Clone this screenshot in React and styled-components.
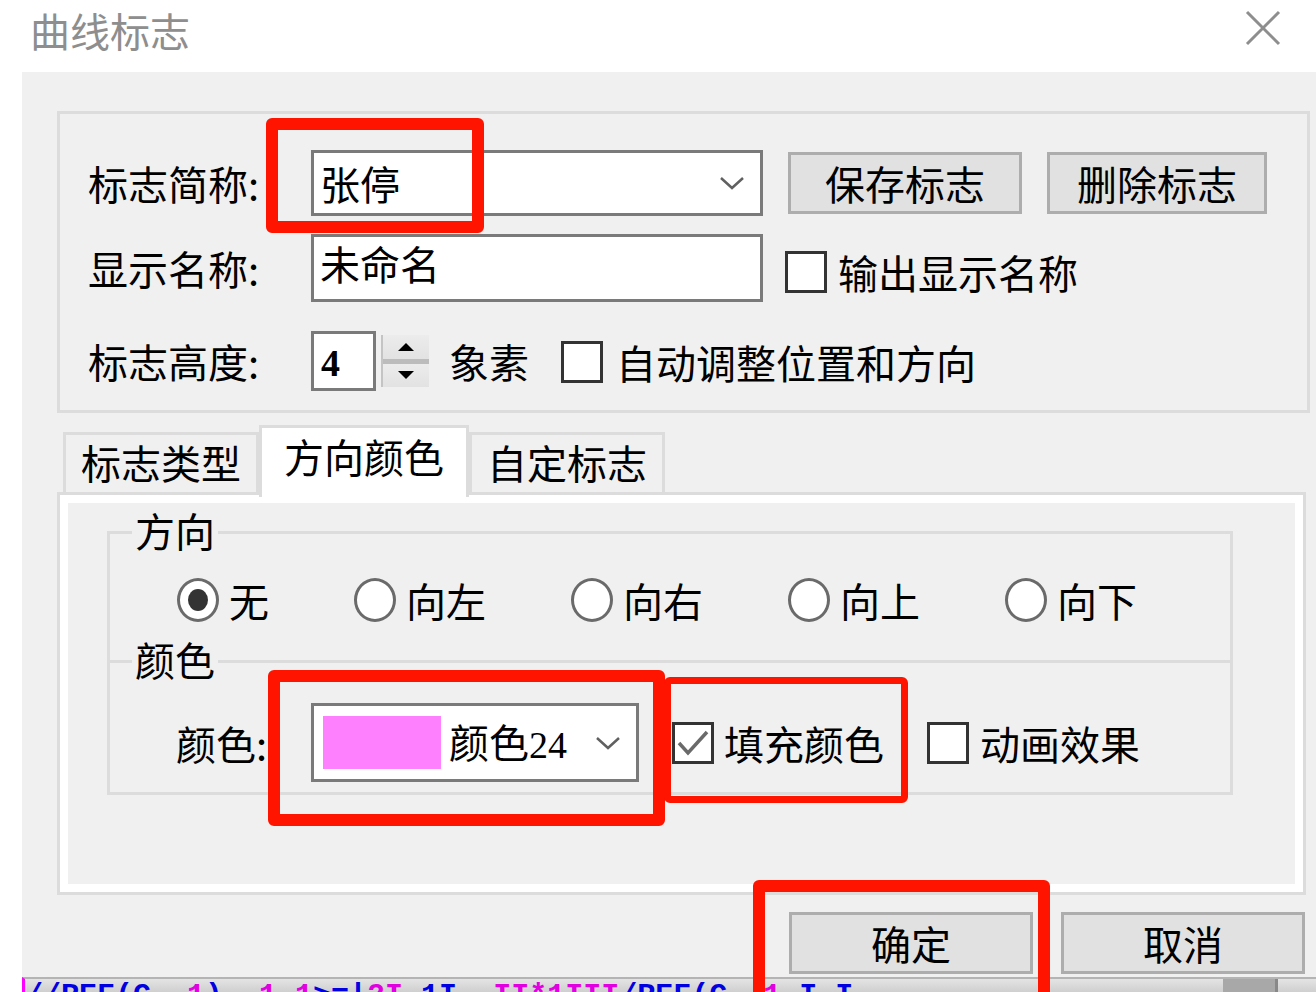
import React from 'react'
import styled, { createGlobalStyle } from 'styled-components'

const GlobalStyle = createGlobalStyle`
  html, body {
    margin: 0;
    padding: 0;
    background: #fff;
  }
  body {
    font-family: "Noto Sans CJK SC", "Noto Sans", sans-serif;
  }
`

const Page = styled.div`
  position: relative;
  width: 1316px;
  height: 992px;
  overflow: hidden;
  background: #fff;
  color: #000;
  font-size: 40px;
  line-height: 40px;
`

const TitleBar = styled.header`
  height: 72px;
  display: flex;
  justify-content: space-between;
  align-items: flex-start;
  padding: 10px 35px 0 30px;
  box-sizing: border-box;
`

const Title = styled.h1`
  margin: 0;
  font-size: 40px;
  line-height: 40px;
  font-weight: normal;
  color: #8e8e8e;
`

const Dialog = styled.main`
  margin-left: 22px;
  height: 905px;
  background: #f0f0f0;
  padding: 39px 6px 0 35px;
  box-sizing: border-box;
  display: flex;
  flex-direction: column;
  overflow: hidden;
`

const TopGroup = styled.section`
  border: 3px solid #dcdcdc;
  padding: 36px 0 19px 28px;
  display: flex;
  flex-direction: column;
`

const Row = styled.div`
  display: flex;
  align-items: center;
  height: ${p => p.$h}px;
  margin-top: ${p => p.$gap || 0}px;
`

const Label = styled.span`
  flex: none;
  width: ${p => p.$w}px;
  white-space: nowrap;
`

const Combo = styled.div`
  flex: none;
  box-sizing: border-box;
  width: 452px;
  height: 66px;
  border: 3px solid #7a7a7a;
  background: #fff;
  display: flex;
  align-items: center;
  justify-content: space-between;
  padding: 0 14px 0 6px;
`

const TextBox = styled.div`
  flex: none;
  box-sizing: border-box;
  width: 452px;
  height: 68px;
  border: 3px solid #7a7a7a;
  background: #fff;
  padding: 6px 0 0 6px;
  align-self: center;
`

const Button = styled.button`
  flex: none;
  box-sizing: border-box;
  width: ${p => p.$w}px;
  height: 62px;
  margin: 0 0 0 ${p => p.$ml || 0}px;
  padding: 0;
  background: #e1e1e1;
  border: 3px solid #adadad;
  border-radius: 0;
  font-family: inherit;
  font-size: 40px;
  line-height: 40px;
  color: #000;
  display: flex;
  align-items: center;
  justify-content: center;
`

const CheckItem = styled.label`
  display: flex;
  align-items: center;
  gap: ${p => p.$gap || 10}px;
  margin-left: ${p => p.$ml || 0}px;
  margin-top: ${p => p.$mt || 0}px;
  white-space: nowrap;
`

const Box = styled.span`
  flex: none;
  box-sizing: border-box;
  width: 42px;
  height: 42px;
  border: 3px solid #333;
  background: #fff;
  display: flex;
  align-items: center;
  justify-content: center;
`

const SpinInput = styled.div`
  flex: none;
  box-sizing: border-box;
  width: 65px;
  height: 60px;
  border: 3px solid #7a7a7a;
  background: #fff;
  display: flex;
  align-items: center;
  padding: 4px 0 0 7px;
`

const Digits = styled.span`
  font-family: "Liberation Serif", "DejaVu Serif", serif;
  font-size: ${p => p.$size || 38}px;
  font-weight: ${p => (p.$bold ? 'bold' : 'normal')};
  line-height: 40px;
`

const Spin = styled.div`
  flex: none;
  width: 46px;
  height: 52px;
  margin-left: 5px;
  display: flex;
  flex-direction: column;
  border-left: 2px solid #c4c4c4;
  background: #e6e6e6;
`

const SpinHalf = styled.div`
  flex: 1;
  display: flex;
  align-items: center;
  justify-content: center;
  background: linear-gradient(#ececec, #e2e2e2);
`

const SpinDivider = styled.div`
  height: 5px;
  background: #bcbcbc;
`

const Unit = styled.span`
  margin-left: 20px;
  white-space: nowrap;
`

const TabStrip = styled.nav`
  display: flex;
  align-items: flex-end;
  margin: 12px 0 0 6px;
`

const Tab = styled.div`
  position: relative;
  box-sizing: border-box;
  height: ${p => (p.$active ? 72 : 60)}px;
  padding: ${p => (p.$active ? '8px 22px 0' : '7px 15px 0')};
  margin-bottom: ${p => (p.$active ? -5 : 0)}px;
  z-index: ${p => (p.$active ? 2 : 1)};
  border: 3px solid #dcdcdc;
  border-bottom: none;
  background: ${p => (p.$active ? '#fff' : '#f0f0f0')};
  white-space: nowrap;
`

const Panel = styled.section`
  box-sizing: border-box;
  height: 403px;
  margin-right: 4px;
  border: 3px solid #dcdcdc;
  box-shadow: inset 0 0 0 8px #fff;
  background: #f0f0f0;
  padding: 36px 0 0 47px;
`

const Frame = styled.div`
  box-sizing: border-box;
  width: 1126px;
  border: 3px solid #dcdcdc;
  border-top: none;
`

const Section = styled.div`
  border-top: 3px solid #dcdcdc;
  padding-bottom: ${p => p.$pb}px;
`

const Caption = styled.div`
  width: fit-content;
  margin: -24px 0 0 22px;
  padding: 0 3px;
  background: #f0f0f0;
  line-height: 40px;
`

const RadioRow = styled.div`
  display: flex;
  align-items: center;
  gap: 85px;
  height: 44px;
  margin-top: 28px;
  padding-left: 67px;
`

const RadioItem = styled.label`
  display: flex;
  align-items: center;
  gap: 10px;
  white-space: nowrap;
`

const Radio = styled.span`
  flex: none;
  box-sizing: border-box;
  width: 42px;
  height: 44px;
  border-radius: 50%;
  border: 3px solid #6a6a6a;
  background: #fff;
  display: flex;
  align-items: center;
  justify-content: center;
  &::after {
    content: '';
    display: ${p => (p.$on ? 'block' : 'none')};
    width: 20px;
    height: 22px;
    border-radius: 50%;
    background: #333;
  }
`

const ColorRow = styled.div`
  display: flex;
  align-items: center;
  height: 79px;
  margin-top: 24px;
  padding-left: 66px;
`

const ColorCombo = styled.div`
  flex: none;
  box-sizing: border-box;
  width: 328px;
  height: 79px;
  border: 3px solid #7a7a7a;
  background: #fff;
  display: flex;
  align-items: center;
  padding: 0 14px 0 9px;
`

const Swatch = styled.span`
  flex: none;
  width: 118px;
  height: 53px;
  background: ${p => p.$color};
`

const ColorName = styled.span`
  margin-left: 8px;
  white-space: nowrap;
  flex: 1;
`

const ButtonBar = styled.div`
  display: flex;
  justify-content: flex-end;
  gap: 28px;
  margin-top: 17px;
  padding-right: 5px;
`

const Strip = styled.div`
  margin-left: 22px;
  height: 15px;
  box-sizing: border-box;
  border-top: 2px solid #b4b4b4;
  border-left: 3px solid #f0f;
  background: linear-gradient(#e4e4e4, #cfcfcf);
  overflow: hidden;
  display: flex;
  font-family: "Liberation Mono", "DejaVu Sans Mono", monospace;
  font-weight: bold;
  font-size: 30px;
  line-height: 30px;
  white-space: pre;
`

const Code = styled.span`
  color: ${p => p.$c};
  margin-top: 2px;
`

const Thumb = styled.span`
  margin-left: auto;
  margin-right: 38px;
  width: 52px;
  background: #a8a8a8;
  border-right: 3px solid #888;
`

const Mark = styled.div`
  position: absolute;
  left: ${p => p.$x}px;
  top: ${p => p.$y}px;
  width: ${p => p.$w}px;
  height: ${p => p.$h}px;
  box-sizing: border-box;
  border: ${p => p.$t}px solid #ff1400;
  border-radius: 6px;
  pointer-events: none;
  z-index: 5;
`

const Chevron = () => (
  <svg width="28" height="16" viewBox="0 0 28 16">
    <polyline points="3,3 14,13 25,3" fill="none" stroke="#606060" strokeWidth="2.5" />
  </svg>
)

const Tick = () => (
  <svg width="34" height="30" viewBox="0 0 34 30">
    <polyline points="3,15 12,25 31,4" fill="none" stroke="#6a6a6a" strokeWidth="3.5" />
  </svg>
)

const Close = () => (
  <svg width="36" height="36" viewBox="0 0 36 36">
    <path d="M2 2 L34 34 M34 2 L2 34" stroke="#8e8e8e" strokeWidth="3" fill="none" />
  </svg>
)

const Arrow = ({ down }) => (
  <svg width="18" height="10" viewBox="0 0 18 10">
    <polygon points={down ? '1,1 17,1 9,9' : '1,9 17,9 9,1'} fill="#000" />
  </svg>
)

const directions = [
  { name: '无', on: true },
  { name: '向左' },
  { name: '向右' },
  { name: '向上' },
  { name: '向下' },
]

const code = [
  ['#0000e0', '//REF(C'],
  ['#e000e0', ', 1'],
  ['#0000e0', ')  '],
  ['#e000e0', '1 1'],
  ['#0000e0', '>=|'],
  ['#e000e0', '2I'],
  ['#0000e0', '-1I  '],
  ['#e000e0', 'II*1III'],
  ['#0000e0', '/REF(C'],
  ['#e000e0', ', 1'],
  ['#0000e0', ' I I'],
]

export default function App() {
  return (
    <Page>
      <GlobalStyle />
      <TitleBar>
        <Title>曲线标志</Title>
        <Close />
      </TitleBar>

      <Dialog>
        <TopGroup>
          <Row $h={66}>
            <Label $w={223}>标志简称:</Label>
            <Combo>
              <span>张停</span>
              <Chevron />
            </Combo>
            <Button $w={234} $ml={25}>保存标志</Button>
            <Button $w={220} $ml={25}>删除标志</Button>
          </Row>
          <Row $h={68} $gap={18}>
            <Label $w={223}>显示名称:</Label>
            <TextBox>未命名</TextBox>
            <CheckItem $ml={22} $mt={8} $gap={11}>
              <Box />
              输出显示名称
            </CheckItem>
          </Row>
          <Row $h={60} $gap={29}>
            <Label $w={223}>标志高度:</Label>
            <SpinInput>
              <Digits $bold>4</Digits>
            </SpinInput>
            <Spin>
              <SpinHalf><Arrow /></SpinHalf>
              <SpinDivider />
              <SpinHalf><Arrow down /></SpinHalf>
            </Spin>
            <Unit>象素</Unit>
            <CheckItem $ml={32} $mt={2} $gap={13}>
              <Box />
              自动调整位置和方向
            </CheckItem>
          </Row>
        </TopGroup>

        <TabStrip>
          <Tab>标志类型</Tab>
          <Tab $active>方向颜色</Tab>
          <Tab>自定标志</Tab>
        </TabStrip>

        <Panel>
          <Frame>
            <Section $pb={38}>
              <Caption>方向</Caption>
              <RadioRow>
                {directions.map(d => (
                  <RadioItem key={d.name}>
                    <Radio $on={d.on} />
                    {d.name}
                  </RadioItem>
                ))}
              </RadioRow>
            </Section>
            <Section $pb={10}>
              <Caption>颜色</Caption>
              <ColorRow>
                <Label $w={135}>颜色:</Label>
                <ColorCombo>
                  <Swatch $color="#ff80ff" />
                  <ColorName>颜色<Digits $size={38}>24</Digits></ColorName>
                  <Chevron />
                </ColorCombo>
                <CheckItem $ml={33} $gap={10}>
                  <Box><Tick /></Box>
                  填充颜色
                </CheckItem>
                <CheckItem $ml={43} $gap={11}>
                  <Box />
                  动画效果
                </CheckItem>
              </ColorRow>
            </Section>
          </Frame>
        </Panel>

        <ButtonBar>
          <Button $w={244}>确定</Button>
          <Button $w={244}>取消</Button>
        </ButtonBar>
      </Dialog>

      <Strip>
        {code.map(([c, t], i) => (
          <Code key={i} $c={c}>{t}</Code>
        ))}
        <Thumb />
      </Strip>

      <Mark $x={266} $y={118} $w={218} $h={115} $t={12} />
      <Mark $x={268} $y={670} $w={397} $h={156} $t={12} />
      <Mark $x={664} $y={677} $w={244} $h={126} $t={7} />
      <Mark $x={753} $y={880} $w={297} $h={130} $t={12} />
    </Page>
  )
}
